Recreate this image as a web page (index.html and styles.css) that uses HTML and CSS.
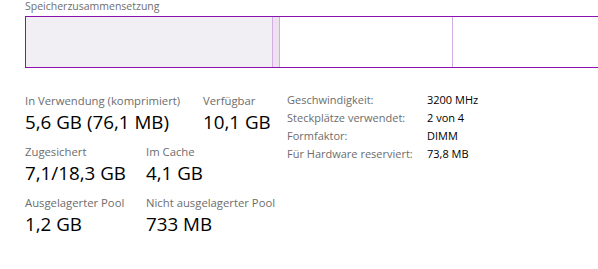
FILE: index.html
```html
<!DOCTYPE html>
<html lang="de">
<head>
<meta charset="utf-8">
<title>Speicher</title>
<link rel="stylesheet" href="styles.css">
</head>
<body>
<div class="panel">
  <div class="title">Speicherzusammensetzung</div>
  <div class="bar">
    <div class="seg seg-inuse"></div>
    <div class="seg seg-modified"></div>
    <div class="seg seg-standby"></div>
    <div class="seg seg-free"></div>
  </div>
  <div class="stats">
    <div class="left">
      <div class="row">
        <div class="stat col-wide">
          <div class="label">In Verwendung (komprimiert)</div>
          <div class="value">5,6 GB (76,1 MB)</div>
        </div>
        <div class="stat">
          <div class="label">Verfügbar</div>
          <div class="value">10,1 GB</div>
        </div>
      </div>
      <div class="row">
        <div class="stat col-narrow">
          <div class="label">Zugesichert</div>
          <div class="value">7,1/18,3 GB</div>
        </div>
        <div class="stat">
          <div class="label">Im Cache</div>
          <div class="value">4,1 GB</div>
        </div>
      </div>
      <div class="row">
        <div class="stat col-narrow">
          <div class="label">Ausgelagerter Pool</div>
          <div class="value">1,2 GB</div>
        </div>
        <div class="stat">
          <div class="label">Nicht ausgelagerter Pool</div>
          <div class="value">733 MB</div>
        </div>
      </div>
    </div>
    <div class="right">
      <div class="k">Geschwindigkeit:</div><div class="v">3200 MHz</div>
      <div class="k">Steckplätze verwendet:</div><div class="v">2 von 4</div>
      <div class="k">Formfaktor:</div><div class="v">DIMM</div>
      <div class="k">Für Hardware reserviert:</div><div class="v">73,8 MB</div>
    </div>
  </div>
</div>
</body>
</html>
```
FILE: styles.css
```css
html, body {
  margin: 0;
  padding: 0;
  background: #ffffff;
  overflow: hidden;
}

.panel {
  padding-left: 25px;
  font-family: "Open Sans", "Noto Sans", sans-serif;
  color: #000;
}

.title {
  margin-top: -2px;
  font-size: 10.5px;
  line-height: 16px;
  color: #6e6e6e;
  white-space: nowrap;
}

.bar {
  margin-top: 2px;
  margin-right: -20px;
  height: 50px;
  border: 1px solid #8b12ae;
  display: flex;
}

.seg-inuse {
  width: 246px;
  background: #f2eff4;
}

.seg-modified {
  width: 6px;
  background: #ebe1ef;
  border-left: 1px solid #d4aee2;
  border-right: 1px solid #d4aee2;
}

.seg-standby {
  width: 172px;
  border-right: 1px solid #d4aee2;
}

.seg-free {
  flex: 1;
}

.stats {
  margin-top: 24px;
  display: flex;
}

.left {
  width: 262px;
  display: flex;
  flex-direction: column;
  gap: 8px;
}

.row {
  display: flex;
}

.col-wide {
  width: 178px;
}

.col-narrow {
  width: 121px;
}

.label {
  font-size: 11.3px;
  line-height: 17px;
  color: #6d6d6d;
  white-space: nowrap;
}

.value {
  font-size: 18.8px;
  line-height: 26px;
  white-space: nowrap;
}

.right {
  margin-top: -1px;
  display: grid;
  grid-template-columns: 140px auto;
  grid-auto-rows: 18px;
  font-size: 11px;
  line-height: 18px;
  white-space: nowrap;
}

.k {
  color: #6d6d6d;
}

.v {
  color: #000;
}
```
